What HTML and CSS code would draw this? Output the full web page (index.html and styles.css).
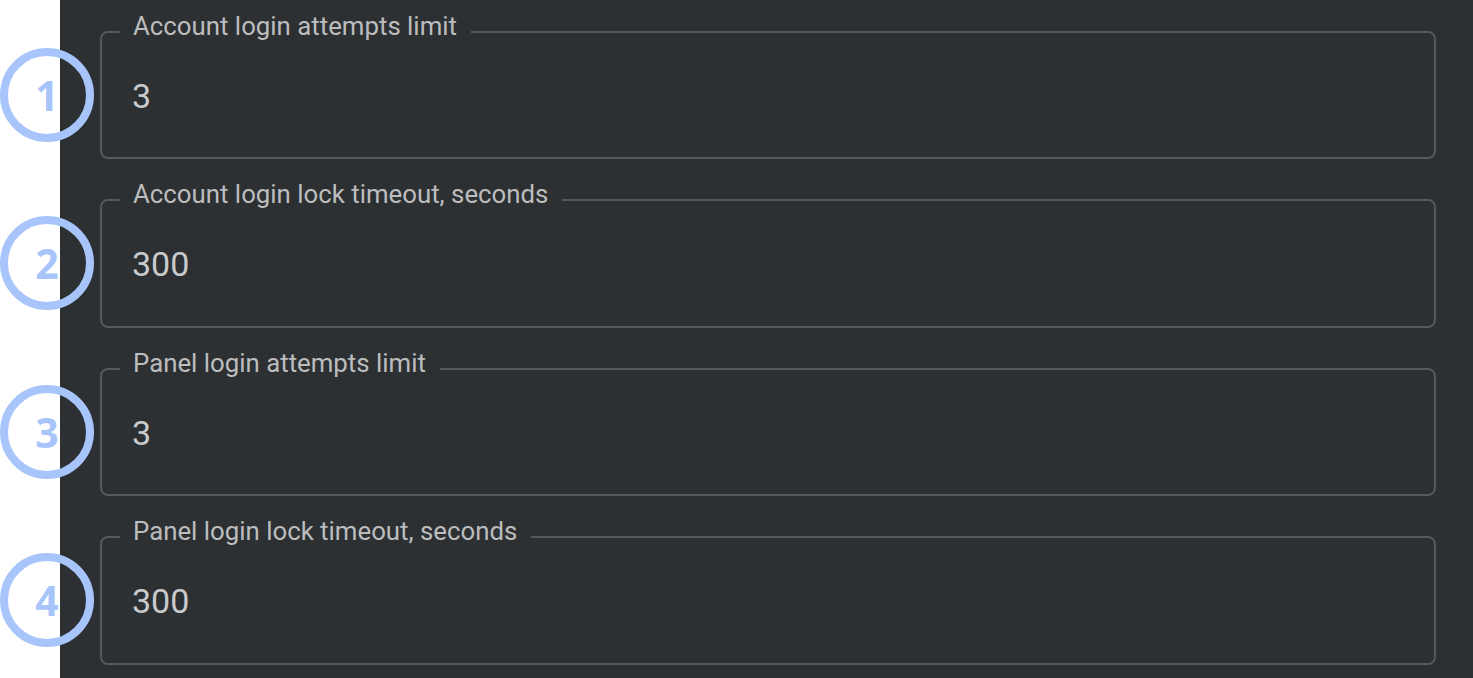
FILE: index.html
```html
<!DOCTYPE html>
<html lang="en">
<head>
    <meta charset="UTF-8">
    <title>Login limits</title>
    <meta name="viewport" content="width=device-width, initial-scale=1.0">
    <link rel="stylesheet" href="styles.css">
</head>
<body>
    <div class="page">
        <div class="gutter"></div>
        <div class="panel">
            <div class="row">
                <span class="step">1</span>
                <fieldset class="field">
                    <legend>Account login attempts limit</legend>
                    <div class="value">3</div>
                </fieldset>
            </div>
            <div class="row">
                <span class="step">2</span>
                <fieldset class="field">
                    <legend>Account login lock timeout, seconds</legend>
                    <div class="value">300</div>
                </fieldset>
            </div>
            <div class="row">
                <span class="step">3</span>
                <fieldset class="field">
                    <legend>Panel login attempts limit</legend>
                    <div class="value">3</div>
                </fieldset>
            </div>
            <div class="row">
                <span class="step">4</span>
                <fieldset class="field">
                    <legend>Panel login lock timeout, seconds</legend>
                    <div class="value">300</div>
                </fieldset>
            </div>
        </div>
    </div>
</body>
</html>
```

FILE: styles.css
```css
html, body { margin: 0; height: 100%; background: #fff; }
body { font-family: Roboto, "Liberation Sans", sans-serif; overflow: hidden; }
.page { display: flex; height: 100%; }
.gutter { width: 60px; flex: none; background: #fff; }
.panel { flex: 1; background: #2d3033; padding: 14px 37px 0 40px; }
.row { position: relative; margin-bottom: 23px; }
.field {
    margin: 0; padding: 0 18px; border: 2px solid #55585c; border-radius: 8px;
}
.field legend {
    padding: 0 14px 12px 13px; font-size: 25.8px; line-height: 24px; color: #bcbdbe;
}
.value { padding: 26px 12px 41px 12px; font-size: 34px; line-height: 40px; color: #c9cacb; }
.row:nth-child(2) .value, .row:nth-child(4) .value { padding-bottom: 42px; }
.step {
    position: absolute; left: -100px; top: 34px;
    width: 78px; height: 78px; border: 8px solid #a8c5fb; border-radius: 50%;
    display: flex; align-items: center; justify-content: center;
    font-family: "Open Sans", sans-serif; font-weight: 700; font-size: 41px; line-height: 1; color: #a8c5fb;
}
```
